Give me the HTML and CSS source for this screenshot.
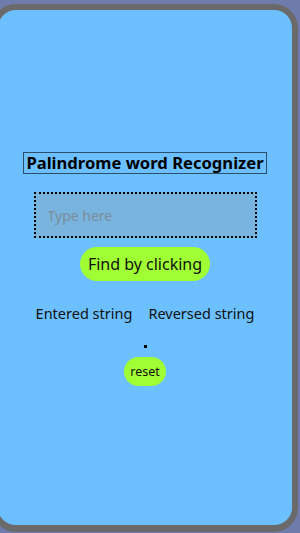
FILE: index.html
```html
<!DOCTYPE html>
<html lang="en">
<head>
    <meta charset="UTF-8">
    <meta name="viewport" content="width=device-width, initial-scale=1.0">
    <title>Palindrome</title>
    <link rel="stylesheet" href="styles.css">
</head>
<body>

    <div class="phone">
        <h1 class="title">Palindrome word Recognizer</h1>

        <input type="text" class="word-input" placeholder="Type here">

        <button class="green-button find-button">Find by clicking</button>

        <div class="strings">
            <span>Entered string</span>
            <span>Reversed string</span>
        </div>

        <div class="result"></div>

        <button class="green-button reset-button">reset</button>
    </div>

</body>
</html>
```

FILE: styles.css
```css
body {
    margin: 0;
    background-color: #6f7cab;
    font-family: "Noto Sans", "Open Sans", sans-serif;
    overflow: hidden;
}

.phone {
    box-sizing: border-box;
    width: 306px;
    height: 528px;
    margin: 4px 0 0 -8px;
    border: 6px solid #6a6a6a;
    border-bottom-width: 7px;
    border-radius: 24px;
    background-color: #6dc0ff;
    display: flex;
    flex-direction: column;
    align-items: center;
    padding-top: 142px;
}

.title {
    margin: 0;
    padding: 0 2px;
    font-size: 16.6px;
    font-weight: bold;
    line-height: 20px;
    border: 1px solid #2d4f6e;
    color: #000;
}

.word-input {
    box-sizing: border-box;
    width: 223px;
    height: 46px;
    margin-top: 18px;
    padding: 0 12px;
    border: 2px dotted #000;
    background-color: #79b4df;
    font-family: inherit;
    font-size: 14px;
    outline: none;
}

.word-input::placeholder {
    color: #7c8c99;
}

.green-button {
    border: none;
    background-color: #a0ff34;
    color: #111;
    font-family: inherit;
    cursor: pointer;
}

.find-button {
    margin-top: 9px;
    height: 34px;
    padding: 0 8px;
    border-radius: 17px;
    font-size: 16px;
}

.strings {
    display: flex;
    gap: 16px;
    margin-top: 22px;
    font-size: 14.5px;
    color: #111;
}

.result {
    width: 3px;
    height: 3px;
    margin-top: 22px;
    background-color: #000;
}

.reset-button {
    margin-top: 9px;
    height: 29px;
    padding: 0 6px;
    border-radius: 15px;
    font-size: 12.5px;
}
```
